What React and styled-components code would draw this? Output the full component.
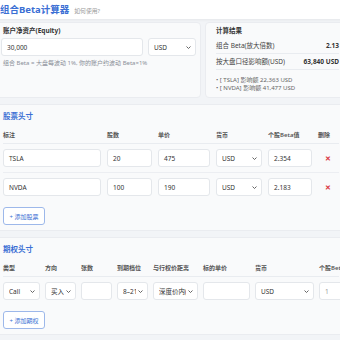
import styled, { createGlobalStyle } from "styled-components"

const GlobalStyle = createGlobalStyle`
  html, body {
    margin: 0;
    padding: 0;
    background: #f2f4f7;
    overflow: hidden;
    font-family: "Noto Sans", "Noto Sans CJK SC", sans-serif;
    color: #333;
  }
`

const stocks = [
  { label: "TSLA", shares: "20", price: "475", currency: "USD", beta: "2.354" },
  { label: "NVDA", shares: "100", price: "190", currency: "USD", beta: "2.183" },
]

const options = [
  { type: "Call", side: "买入", qty: "", expiry: "8–21天", moneyness: "深度价内(ITM)", price: "", currency: "USD", beta: "1" },
]

function Chevron() {
  return (
    <svg width="5" height="3" viewBox="0 0 5 3">
      <path d="M0.5 0.5 L2.5 2.5 L4.5 0.5" fill="none" stroke="#555" strokeWidth="0.9" />
    </svg>
  )
}

function Select({ value }) {
  return (
    <SelectBox>
      <SelectText>{value}</SelectText>
      <Chevron />
    </SelectBox>
  )
}

function App() {
  return (
    <Page>
      <GlobalStyle />
      <Header>
        <Title>组合Beta计算器</Title>
        <HelpLink>如何使用?</HelpLink>
      </Header>
      <Main>
        <TopRow>
          <EquityCard>
            <FieldLabel>账户净资产(Equity)</FieldLabel>
            <EquityRow>
              <Input>30,000</Input>
              <Select value="USD" />
            </EquityRow>
            <Hint>组合 Beta = 大盘每波动 1%, 你的账户约波动 Beta×1%</Hint>
          </EquityCard>
          <ResultCard>
            <ResultTitle>计算结果</ResultTitle>
            <ResultRow>
              <span>组合 Beta(放大倍数)</span>
              <strong>2.13</strong>
            </ResultRow>
            <ResultRow>
              <span>按大盘口径影响额(USD)</span>
              <strong>63,840 USD</strong>
            </ResultRow>
            <BulletList>
              <li>• [ TSLA] 影响额 22,363 USD</li>
              <li>• [ NVDA] 影响额 41,477 USD</li>
            </BulletList>
          </ResultCard>
        </TopRow>

        <Card>
          <SectionTitle>股票头寸</SectionTitle>
          <StockGrid $head>
            <span>标注</span>
            <span>股数</span>
            <span>单价</span>
            <span>货币</span>
            <span>个股Beta值</span>
            <span>删除</span>
          </StockGrid>
          {stocks.map((s) => (
            <StockGrid key={s.label}>
              <Input>{s.label}</Input>
              <Input>{s.shares}</Input>
              <Input>{s.price}</Input>
              <Select value={s.currency} />
              <Input>{s.beta}</Input>
              <Delete>✕</Delete>
            </StockGrid>
          ))}
          <AddButton>+ 添加股票</AddButton>
        </Card>

        <Card>
          <SectionTitle>期权头寸</SectionTitle>
          <OptionGrid $head>
            <span>类型</span>
            <span>方向</span>
            <span>张数</span>
            <span>到期档位</span>
            <span>与行权价距离</span>
            <span>标的单价</span>
            <span>货币</span>
            <span>个股Beta值</span>
          </OptionGrid>
          {options.map((o, i) => (
            <OptionGrid key={i}>
              <Select value={o.type} />
              <Select value={o.side} />
              <Input>{o.qty}</Input>
              <Select value={o.expiry} />
              <Select value={o.moneyness} />
              <Input>{o.price}</Input>
              <Select value={o.currency} />
              <Input $muted>{o.beta}</Input>
            </OptionGrid>
          ))}
          <AddButton>+ 添加期权</AddButton>
        </Card>
      </Main>
    </Page>
  )
}

export default App

const Page = styled.div`
  width: 360px;
  margin-left: -10px;
`

const Header = styled.header`
  height: 19px;
  background: #fff;
  box-shadow: 0 1px 3px rgba(0, 0, 0, 0.06);
  display: flex;
  align-items: center;
  padding-left: 10px;
`

const Title = styled.h1`
  margin: 0;
  font-size: 9.5px;
  font-weight: 700;
  color: #3b6fd4;
  line-height: 12px;
`

const HelpLink = styled.span`
  margin-left: 5px;
  font-size: 5.8px;
  color: #999;
  margin-top: 2px;
`

const Main = styled.main`
  display: flex;
  flex-direction: column;
  gap: 6px;
  padding-top: 3px;
`

const TopRow = styled.div`
  display: grid;
  grid-template-columns: 211px 1fr;
  gap: 4px;
`

const Card = styled.section`
  background: #f9fafb;
  border: 1px solid #eaecf0;
  border-radius: 4px;
  padding: 5px 10px 5px 12px;
`

const EquityCard = styled(Card)`
  padding: 3px 4px 5px 10px;
`

const FieldLabel = styled.div`
  font-size: 6.5px;
  font-weight: 700;
  line-height: 10px;
  color: #333;
  margin: 0 0 2px 2px;
`

const EquityRow = styled.div`
  display: grid;
  grid-template-columns: 1fr 48px;
  gap: 5px;
`

const Hint = styled.div`
  margin: 2px 0 0 2px;
  font-size: 6px;
  line-height: 10px;
  color: #8a8f98;
  white-space: nowrap;
`

const ResultCard = styled(Card)`
  padding: 3px 10px 5px 10px;
`

const ResultTitle = styled.div`
  font-size: 6.5px;
  font-weight: 700;
  line-height: 10px;
  margin-bottom: 2px;
`

const ResultRow = styled.div`
  display: flex;
  justify-content: space-between;
  align-items: center;
  font-size: 6.5px;
  line-height: 10px;
  padding: 3px 0 2px;
  border-bottom: 1px solid #e9ecf0;
  white-space: nowrap;
  color: #444;

  strong {
    font-weight: 700;
    color: #333;
  }
`

const BulletList = styled.ul`
  list-style: none;
  margin: 6px 0 0;
  padding: 0;
  font-size: 6px;
  line-height: 8px;
  color: #666;
  white-space: nowrap;
`

const SectionTitle = styled.h2`
  margin: 0;
  font-size: 7.5px;
  font-weight: 700;
  line-height: 12px;
  color: #3b6fd4;
`

const rowStyle = `
  display: grid;
  align-items: center;
  white-space: nowrap;
`

const headStyle = `
  margin-top: 6px;
  padding: 2px 0 3px;
  font-size: 6px;
  font-weight: 600;
  line-height: 10px;
  color: #555;
  border-bottom: 1px solid #e9ecf0;
`

const bodyStyle = `
  padding: 5px 0;
  &:not(:last-of-type) {
    border-bottom: 1px solid #eceef2;
  }
`

const StockGrid = styled.div`
  ${rowStyle}
  grid-template-columns: 98px 45px 52px 46px 44px 20px;
  column-gap: 6px;
  ${(p) => (p.$head ? headStyle : bodyStyle)}
`

const OptionGrid = styled.div`
  ${rowStyle}
  grid-template-columns: 37px 31px 31px 31px 45px 47px 59px 40px;
  column-gap: 5px;
  ${(p) => (p.$head ? headStyle : bodyStyle)}
`

const fieldBase = `
  box-sizing: border-box;
  height: 18px;
  background: #fff;
  border: 1px solid #e4e7eb;
  border-radius: 3px;
  font-size: 6.5px;
  color: #333;
  display: flex;
  align-items: center;
  min-width: 0;
`

const Input = styled.div`
  ${fieldBase}
  padding: 0 5px;
  color: ${(p) => (p.$muted ? "#999" : "#333")};
`

const SelectBox = styled.div`
  ${fieldBase}
  padding: 0 4px 0 5px;
  gap: 2px;
  justify-content: space-between;

  svg {
    flex-shrink: 0;
  }
`

const SelectText = styled.span`
  flex: 1;
  min-width: 0;
  overflow: hidden;
  white-space: nowrap;
`

const Delete = styled.span`
  color: #d9363e;
  font-size: 7px;
  font-weight: 700;
  text-align: center;
`

const AddButton = styled.button`
  display: block;
  margin-top: 6px;
  width: 42px;
  height: 18px;
  padding: 0;
  background: #fff;
  border: 1px solid #9db8ea;
  border-radius: 3px;
  color: #3b6fd4;
  font-family: inherit;
  font-size: 6px;
  cursor: pointer;
`
